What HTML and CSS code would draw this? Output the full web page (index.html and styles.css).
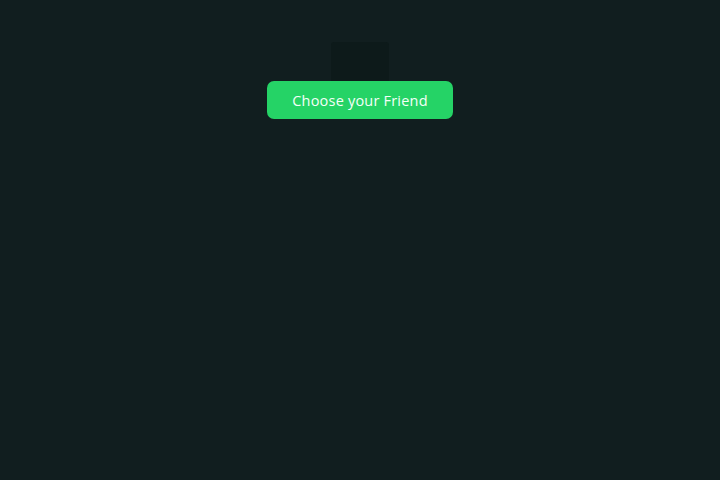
FILE: index.html
```html
<!DOCTYPE html>
<html lang="en">
<head>
  <meta charset="UTF-8">
  <title>Choose your Friend</title>
  <link rel="stylesheet" href="styles.css">
</head>
<body>
  <div class="welcome">
    <div class="avatar"></div>
    <button class="choose-btn">Choose your Friend</button>
  </div>
</body>
</html>
```

FILE: styles.css
```css
body {
  margin: 0;
  height: 100vh;
  background: #111e1f;
  font-family: "Open Sans", sans-serif;
}

.welcome {
  display: flex;
  flex-direction: column;
  align-items: center;
  padding-top: 42px;
}

.avatar {
  width: 58px;
  height: 40px;
  background: #0d1a1a;
  border-radius: 3px 3px 0 0;
}

.choose-btn {
  width: 186px;
  height: 38px;
  margin-top: -1px;
  border: none;
  border-radius: 7px;
  background: #25d366;
  color: #f4fff8;
  font-family: "Open Sans", sans-serif;
  font-size: 14.5px;
  font-weight: 500;
  letter-spacing: 0.2px;
}
```
